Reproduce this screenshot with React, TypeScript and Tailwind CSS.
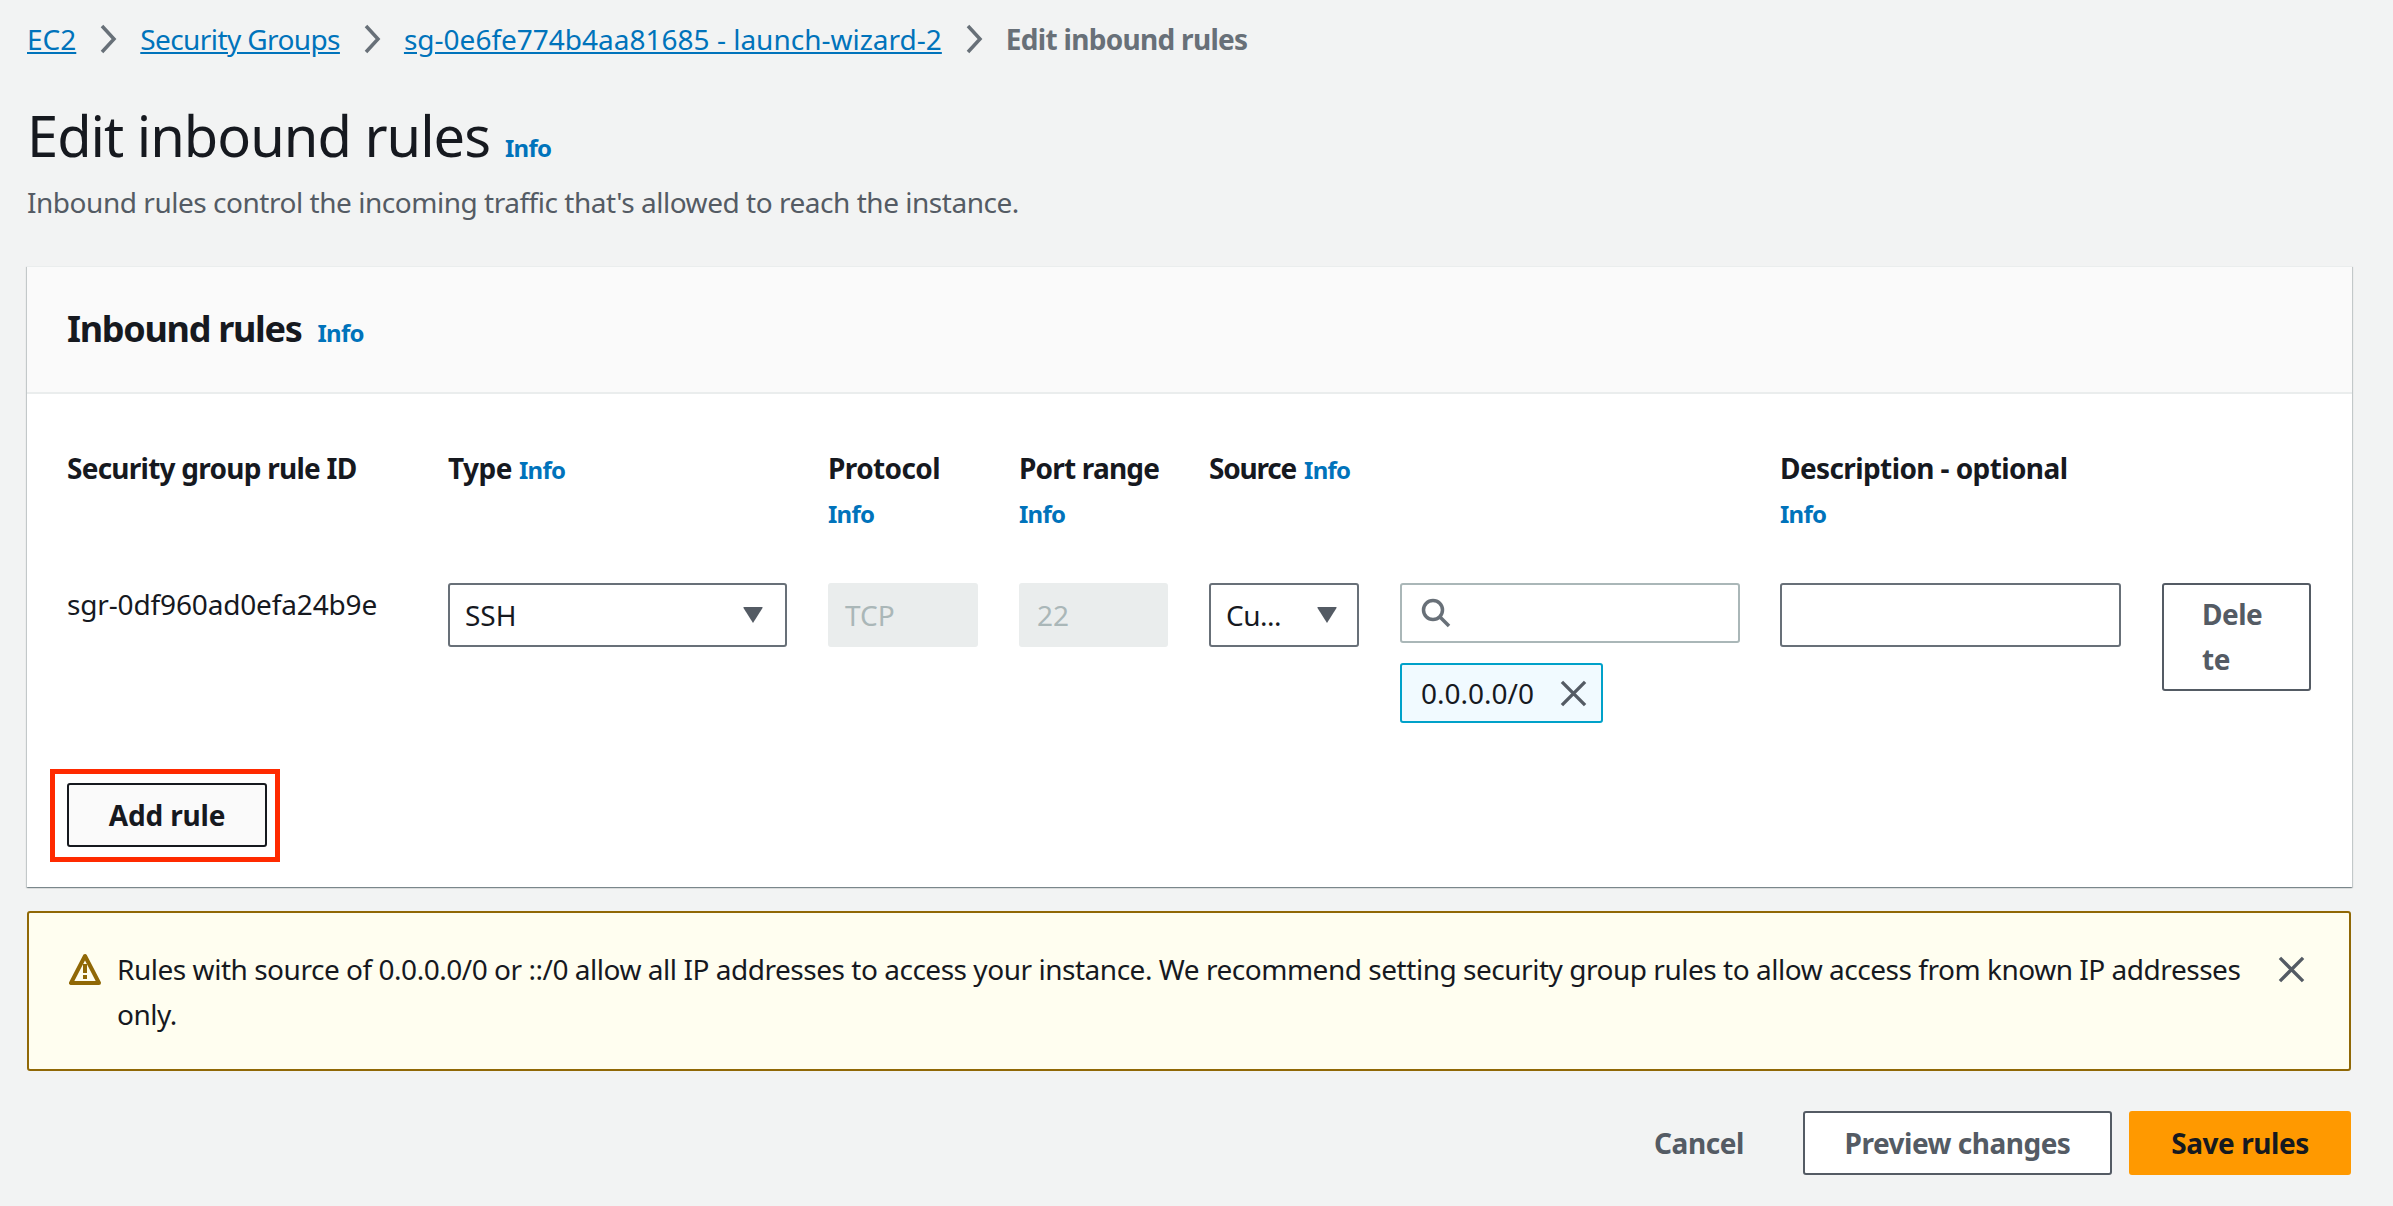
const Chevron = () => (
  <svg className="w-[18px] h-[30px] mx-[23px] shrink-0" viewBox="0 0 18 30" fill="none" stroke="#687078" strokeWidth="3.5">
    <path d="M3 2l12 13L3 28" />
  </svg>
);

const Caret = () => (
  <svg className="w-[20px] h-[16px] shrink-0" viewBox="0 0 20 16" fill="#545b64">
    <path d="M1 0h18q1 0 .5 1L10 16 .5 1Q0 0 1 0z" />
  </svg>
);

const Close = ({ size }: { size: string }) => (
  <svg className={size} viewBox="0 0 28 28" fill="none" stroke="#545b64" strokeWidth="3.5">
    <path d="M2 2l24 24M26 2L2 26" />
  </svg>
);

const Info = ({ className = '' }: { className?: string }) => (
  <a className={`text-[24px] leading-[32px] font-bold tracking-[-0.75px] text-[#0073bb] ${className}`}>Info</a>
);

const Label = ({ children, className = '' }: { children: string; className?: string }) => (
  <span className={`text-[28px] leading-[45px] font-bold text-[#16191f] ${className}`}>{children}</span>
);

export default function App() {
  return (
    <div className="min-h-[1206px] bg-[#f2f3f3] pl-[27px] pr-[41px] font-['Noto_Sans',sans-serif] text-[#16191f]">
      {/* Breadcrumbs */}
      <nav className="flex items-center h-[78px] text-[28px]">
        <a className="underline text-[#0073bb]">EC2</a>
        <Chevron />
        <a className="underline text-[#0073bb] tracking-[-0.6px]">Security Groups</a>
        <Chevron />
        <a className="underline text-[#0073bb]">sg-0e6fe774b4aa81685 - launch-wizard-2</a>
        <Chevron />
        <span className="font-bold text-[#687078] tracking-[-0.7px]">Edit inbound rules</span>
      </nav>

      {/* Page header */}
      <div className="flex items-baseline gap-[15px] mt-[19px]">
        <h1 className="text-[56px] leading-[76px] font-normal tracking-[-1px]">Edit inbound rules</h1>
        <Info />
      </div>
      <p className="text-[28px] leading-[45px] text-[#545b64] mt-[7px] tracking-[-0.47px]">
        Inbound rules control the incoming traffic that's allowed to reach the instance.
      </p>

      {/* Rules card */}
      <section className="mt-[41px] bg-white border-t border-[#eaeded] shadow-[0_1px_1px_0_rgba(0,28,36,0.3),1px_1px_1px_0_rgba(0,28,36,0.15),-1px_1px_1px_0_rgba(0,28,36,0.15)]">
        <div className="flex items-baseline gap-[16px] h-[127px] pl-[40px] pt-[38px] bg-[#fafafa] border-b-2 border-[#eaeded]">
          <h2 className="text-[36px] leading-[48px] font-bold tracking-[-1.3px]">Inbound rules</h2>
          <Info />
        </div>

        <div className="pl-[40px] pt-[52px] pb-[40px]">
          <div className="grid grid-cols-[340px_339px_150px_149px_150px_339px_341px_149px] gap-x-[41px]">
            <Label className="tracking-[-0.75px]">Security group rule ID</Label>
            <div className="flex items-baseline gap-[7px]">
              <Label className="tracking-[-0.5px]">Type</Label>
              <Info />
            </div>
            <div className="flex flex-col items-start">
              <Label className="tracking-[-0.6px]">Protocol</Label>
              <Info className="leading-[45px]" />
            </div>
            <div className="flex flex-col items-start">
              <Label className="tracking-[-0.8px]">Port range</Label>
              <Info className="leading-[45px]" />
            </div>
            <div className="flex items-baseline gap-[8px]">
              <Label className="tracking-[-1.2px]">Source</Label>
              <Info />
            </div>
            <div />
            <div className="flex flex-col items-start">
              <Label className="tracking-[-0.6px]">Description - optional</Label>
              <Info className="leading-[45px]" />
            </div>
            <div />

            <div className="mt-[46px] text-[28px] leading-[45px] tracking-[-0.15px]">sgr-0df960ad0efa24b9e</div>
            <div className="mt-[47px] h-[64px] flex items-center justify-between pl-[15px] pr-[22px] bg-white border-2 border-[#687078] rounded-[3px] text-[28px]">
              <span>SSH</span>
              <Caret />
            </div>
            <div className="mt-[47px] h-[64px] flex items-center pl-[17px] bg-[#eaeded] rounded-[3px] text-[28px] text-[#aab7b8]">TCP</div>
            <div className="mt-[47px] h-[64px] flex items-center pl-[18px] bg-[#eaeded] rounded-[3px] text-[28px] text-[#aab7b8]">22</div>
            <div className="mt-[47px] h-[64px] flex items-center justify-between pl-[15px] pr-[20px] bg-white border-2 border-[#687078] rounded-[3px] text-[28px]">
              <span className="tracking-[-0.5px]">Cu...</span>
              <Caret />
            </div>
            <div className="mt-[47px] flex flex-col items-start gap-[20px]">
              <div className="w-[340px] h-[60px] flex items-center pl-[19px] bg-white border-2 border-[#aab7b8] rounded-[3px]">
                <svg className="w-[30px] h-[30px]" viewBox="0 0 30 30" fill="none" stroke="#687078" strokeWidth="3.5">
                  <circle cx="12" cy="12" r="9.5" />
                  <path d="M19 19l9 9" />
                </svg>
              </div>
              <div className="h-[60px] w-[203px] flex items-center justify-between pl-[19px] pr-[14px] bg-[#f1faff] border-2 border-[#00a1c9] rounded-[3px] text-[28px]">
                <span>0.0.0.0/0</span>
                <Close size="w-[27px] h-[27px]" />
              </div>
            </div>
            <div className="mt-[47px] w-[341px] h-[64px] bg-white border-2 border-[#687078] rounded-[3px]" />
            <button className="mt-[47px] h-[108px] pl-[38px] pr-[42px] text-left bg-white border-2 border-[#545b64] rounded-[3px] text-[28px] leading-[45px] font-bold text-[#545b64] tracking-[-0.5px] break-all">
              Delete
            </button>
          </div>

          {/* Button with the red annotation box round it */}
          <div className="relative w-[200px] mt-[60px]">
            <button className="block w-[200px] h-[64px] bg-[#fafafa] border-2 border-[#16191f] rounded-[3px] text-[28px] font-bold tracking-[-0.15px]">
              Add rule
            </button>
            <div className="absolute -left-[17px] -right-[13px] -top-[14px] -bottom-[15px] border-[5px] border-[#ff2a00] pointer-events-none" />
          </div>
        </div>
      </section>

      {/* Warning */}
      <div className="mt-[24px] mr-[1px] h-[160px] flex items-start pl-[40px] pr-[44px] pt-[34px] bg-[#fffef0] border-2 border-[#906806] rounded-[3px]">
        <svg className="w-[32px] h-[32px] mt-[6px] shrink-0" viewBox="0 0 32 32" fill="none">
          <path d="M16 3L2 30h28z" stroke="#906806" strokeWidth="4" strokeLinejoin="round" />
          <path d="M14 11h4v9h-4zM14 22h4v4h-4z" fill="#906806" />
        </svg>
        <p className="ml-[16px] flex-1 text-[28px] leading-[45px] tracking-[-0.47px]">
          Rules with source of 0.0.0.0/0 or ::/0 allow all IP addresses to access your instance. We recommend setting security group rules to allow access from known IP addresses only.
        </p>
        <div className="ml-[16px] mt-[9px]">
          <Close size="w-[27px] h-[27px]" />
        </div>
      </div>

      {/* Footer actions */}
      <div className="mt-[40px] mr-[1px] flex items-center justify-end">
        <span className="text-[28px] font-bold text-[#545b64] mr-[59px] tracking-[-0.4px]">Cancel</span>
        <button className="w-[309px] h-[64px] bg-white border-2 border-[#545b64] rounded-[3px] text-[28px] font-bold text-[#545b64] tracking-[-0.5px]">
          Preview changes
        </button>
        <button className="ml-[17px] w-[222px] h-[64px] bg-[#ff9900] rounded-[3px] text-[28px] font-bold tracking-[-0.45px]">
          Save rules
        </button>
      </div>
    </div>
  );
}
